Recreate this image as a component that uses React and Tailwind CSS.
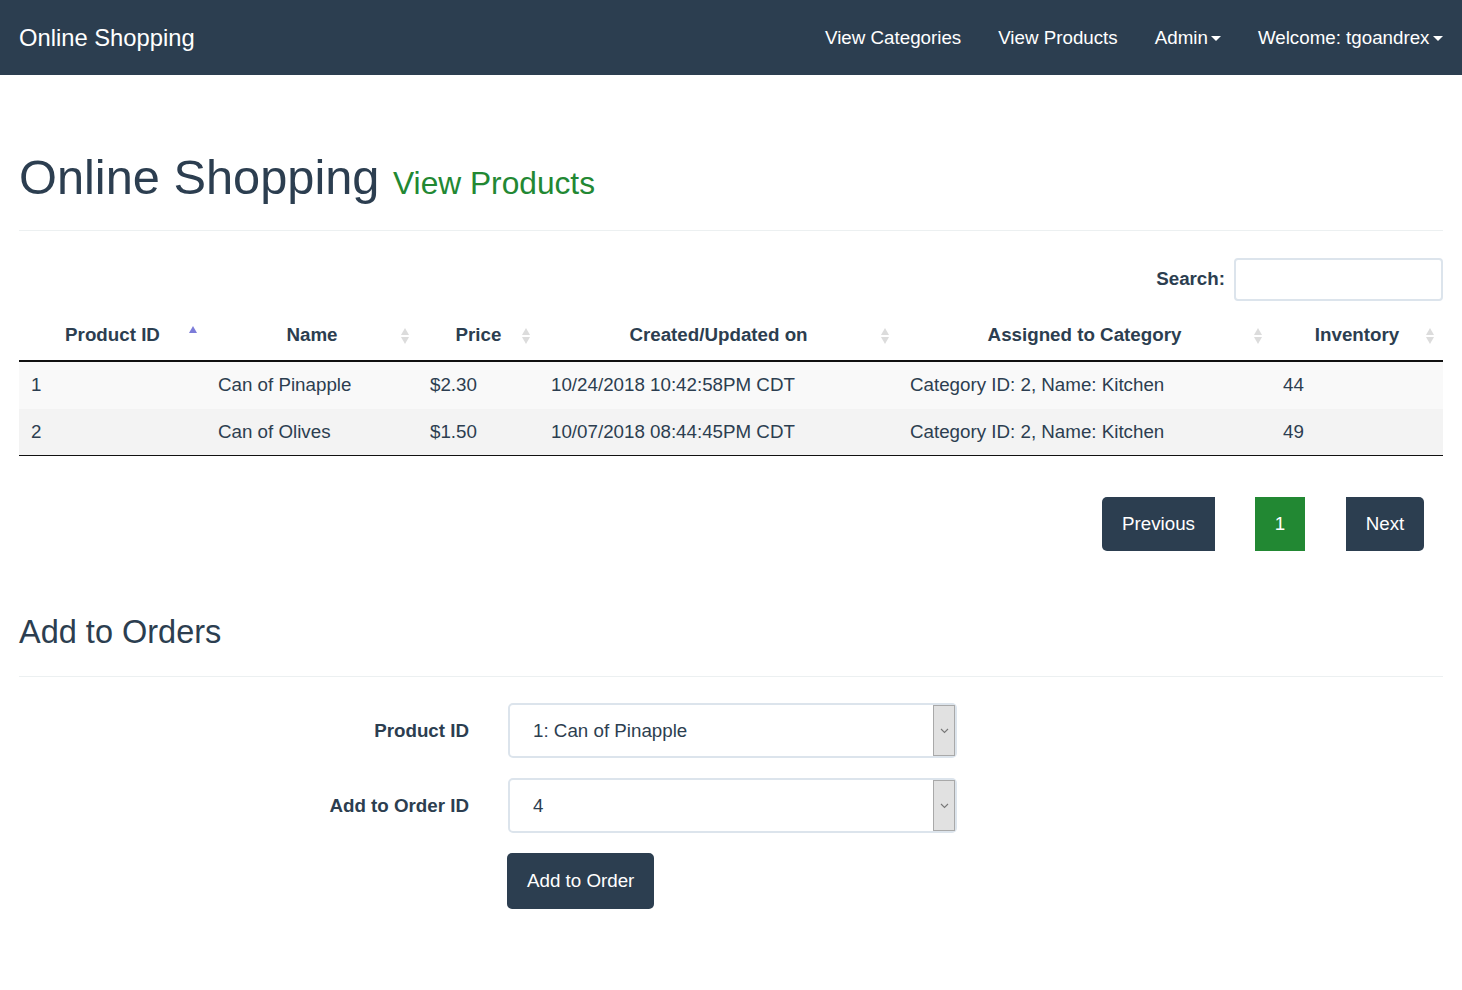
import React from 'react';

const font = { fontFamily: '"Liberation Sans", Arial, sans-serif' };

function Caret() {
  return (
    <span className="inline-block ml-[3px] w-0 h-0 border-t-[5px] border-t-white border-x-[5px] border-x-transparent align-middle" />
  );
}

function SortIcon({ active }) {
  if (active) {
    return (
      <svg width="10" height="18" viewBox="0 0 10 18" className="absolute right-[8px] top-[14px]">
        <path d="M1 8 L5 1 L9 8 Z" fill="#7c7cd9" />
      </svg>
    );
  }
  return (
    <svg width="10" height="18" viewBox="0 0 10 18" className="absolute right-[8px] top-[16px]">
      <path d="M1 8 L5 1 L9 8 Z" fill="#dcdcdc" />
      <path d="M1 10 L9 10 L5 17 Z" fill="#dcdcdc" />
    </svg>
  );
}

const columns = [
  { label: 'Product ID', w: 'w-[187px]', active: true },
  { label: 'Name', w: 'w-[212px]' },
  { label: 'Price', w: 'w-[121px]' },
  { label: 'Created/Updated on', w: 'w-[359px]' },
  { label: 'Assigned to Category', w: 'w-[373px]' },
  { label: 'Inventory', w: 'w-[172px]' },
];

const rows = [
  ['1', 'Can of Pinapple', '$2.30', '10/24/2018 10:42:58PM CDT', 'Category ID: 2, Name: Kitchen', '44'],
  ['2', 'Can of Olives', '$1.50', '10/07/2018 08:44:45PM CDT', 'Category ID: 2, Name: Kitchen', '49'],
];

function Select({ value }) {
  return (
    <div className="w-[449px] h-[55px] border-2 border-[#dce4ec] rounded-[5px] flex items-stretch bg-white">
      <div className="flex-1 flex items-center pl-[23px] text-[18.75px] text-[#2c3e50]">{value}</div>
      <div className="w-[22px] bg-[#e1e1e1] border border-[#a9a9a9] flex items-center justify-center">
        <svg width="9" height="6" viewBox="0 0 9 6">
          <path d="M1 1 L4.5 4.5 L8 1" stroke="#777" strokeWidth="1.1" fill="none" />
        </svg>
      </div>
    </div>
  );
}

export default function App() {
  return (
    <div className="min-h-[990px] bg-white text-[#2c3e50]" style={font}>
      <nav className="h-[75px] bg-[#2c3e50] flex items-center justify-between pl-[19px] text-white">
        <span className="text-[23.75px]">Online Shopping</span>
        <div className="flex items-center text-[18.75px] pt-[2px] pr-[1px]">
          <span className="px-[18.5px]">View Categories</span>
          <span className="px-[18.5px]">View Products</span>
          <span className="px-[18.5px] flex items-center">Admin<Caret /></span>
          <span className="px-[18.5px] flex items-center">Welcome: tgoandrex<Caret /></span>
        </div>
      </nav>

      <div className="px-[19px]">
        <div className="mt-[76px] pb-[11px] border-b border-[#ecf0f1]">
          <h1 className="text-[48.75px] leading-[1.1] mb-[14px]">
            Online Shopping <span className="text-[31.7px] text-[#228833]">View Products</span>
          </h1>
        </div>

        <div className="flex justify-end items-center mt-[27px] gap-[9px]">
          <span className="font-bold text-[18.75px]">Search:</span>
          <div className="w-[209px] h-[43px] border-2 border-[#dce4ec] rounded-[4px]" />
        </div>

        <div className="mt-[10px] text-[18.75px]">
          <div className="flex h-[51px] border-b-2 border-[#111]">
            {columns.map((c) => (
              <div key={c.label} className={`${c.w} relative flex items-center justify-center font-bold`}>
                {c.label}
                <SortIcon active={c.active} />
              </div>
            ))}
          </div>
          {rows.map((r, i) => (
            <div key={i} className={`flex h-[47px] items-center ${i === 0 ? 'bg-[#f9f9f9]' : 'bg-[#f3f3f3] border-b border-[#111]'}`}>
              {r.map((cell, j) => (
                <div key={j} className={`${columns[j].w} pl-[12px]`}>{cell}</div>
              ))}
            </div>
          ))}
        </div>

        <div className="flex justify-end mt-[41px] pr-[19px] text-[18.75px] text-white">
          <div className="h-[54px] w-[113px] bg-[#2c3e50] rounded-l-[5px] flex items-center justify-center">Previous</div>
          <div className="ml-[40px] h-[54px] w-[50px] bg-[#228833] flex items-center justify-center">1</div>
          <div className="ml-[41px] h-[54px] w-[78px] bg-[#2c3e50] rounded-r-[5px] flex items-center justify-center">Next</div>
        </div>

        <div className="mt-[64px] pb-[26px] border-b border-[#ecf0f1]">
          <h2 className="text-[32.5px] leading-[1.1]">Add to Orders</h2>
        </div>

        <div className="mt-[26px] flex flex-col">
          <div className="flex items-center">
            <label className="w-[450px] text-right font-bold text-[18.75px]">Product ID</label>
            <div className="ml-[39px]"><Select value="1: Can of Pinapple" /></div>
          </div>
          <div className="flex items-center mt-[20px]">
            <label className="w-[450px] text-right font-bold text-[18.75px]">Add to Order ID</label>
            <div className="ml-[39px]"><Select value="4" /></div>
          </div>
          <div className="ml-[488px] mt-[20px]">
            <button className="h-[56px] px-[20px] bg-[#2c3e50] text-white rounded-[5px] text-[18.75px]">Add to Order</button>
          </div>
        </div>
      </div>
    </div>
  );
}
